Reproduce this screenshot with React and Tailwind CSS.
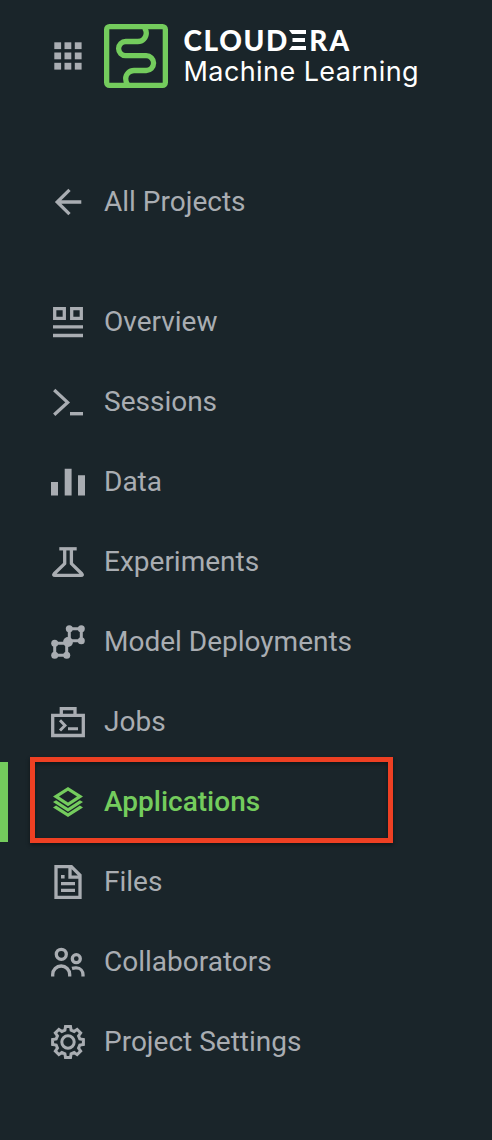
import React from "react";

function Icon({ children }) {
  return (
    <svg viewBox="0 0 36 36" className="size-9 shrink-0" fill="none" stroke="currentColor" strokeWidth="3.3" aria-hidden="true">
      {children}
    </svg>
  );
}

const solid = { fill: "currentColor", stroke: "none" };

function gearPath() {
  const points = [];
  for (let i = 0; i < 8; i++) {
    const a = (i * Math.PI) / 4;
    const corners = [
      [-3.1, -11.8],
      [-2.5, -15.4],
      [2.5, -15.4],
      [3.1, -11.8],
    ];
    for (const [x, y] of corners) {
      const px = 18 + x * Math.cos(a) - y * Math.sin(a);
      const py = 18 + x * Math.sin(a) + y * Math.cos(a);
      points.push(px.toFixed(2) + " " + py.toFixed(2));
    }
  }
  return "M" + points.join("L") + "Z";
}

const icons = {
  back: <path d="M31.3 18H7M19.5 5.8L7.2 18L19.5 30.2" />,
  overview: (
    <>
      <path d="M4.7 4.7H14.3V14.3H4.7ZM21.7 4.7H31.3V14.3H21.7Z" />
      <path {...solid} d="M3 21.2H33V24.6H3ZM3 29.8H33V33.2H3Z" />
    </>
  ),
  sessions: (
    <>
      <path d="M4.2 6L17.6 18.4L4.2 30.8" />
      <path {...solid} d="M20 28H33V31.4H20Z" />
    </>
  ),
  data: <path {...solid} d="M1 18H8V31.4H1ZM14.7 4.7H21.6V31.4H14.7ZM28 11.2H35V31.4H28Z" />,
  experiments: (
    <>
      <path d="M9.3 4.8H26.7" />
      <path strokeLinejoin="round" d="M14.7 5V19.6L4.2 29.8Q2.8 31.4 5 31.4H31Q33.2 31.4 31.8 29.8L21.4 19.6V5" />
    </>
  ),
  models: (
    <>
      <path strokeWidth="3" d="M19.3 4.7H31.3V16.7H19.3ZM4.7 19.2H16.7V31.2H4.7Z" />
      <g {...solid}>
        <circle cx="19.3" cy="4.7" r="3.5" />
        <circle cx="31.3" cy="4.7" r="3.5" />
        <circle cx="31.3" cy="16.7" r="3.5" />
        <circle cx="18" cy="18" r="4.9" />
        <circle cx="4.7" cy="19.2" r="3.5" />
        <circle cx="4.7" cy="31.2" r="3.5" />
        <circle cx="16.7" cy="31.2" r="3.5" />
      </g>
    </>
  ),
  jobs: (
    <>
      <path d="M2.7 11.3H33.3V31.5H2.7ZM11.3 11V4.7H25V11" />
      <path strokeWidth="2.9" d="M10 16.2L15 21.4L10 26.6M18 24.8H28" />
    </>
  ),
  applications: (
    <path
      {...solid}
      fillRule="evenodd"
      d="M18 3L33 12.5L18 22.2L3 12.5ZM18 6.8L9 12.5L18 18.4L27 12.5ZM6.1 16.2L18 23.9L29.9 16.2L33 18.1L18 27.7L3 18.1ZM6.1 21.5L18 29.2L29.9 21.5L33 23.4L18 33L3 23.4Z"
    />
  ),
  files: (
    <>
      <path d="M6 2.7H21.4L30 11.3V33.3H6ZM20 3V13.1H30" />
      <path {...solid} d="M11 11H14.6V14.6H11ZM11 18H25V21.3H11ZM11 24.7H25V28H11Z" />
    </>
  ),
  collaborators: (
    <>
      <circle cx="11.3" cy="10.3" r="5" />
      <circle cx="26.3" cy="14.7" r="4" />
      <path d="M2.7 32.4V30.5A8.5 8.5 0 0 1 19.7 30.5V32.4M22 24.4Q24 23.8 26.3 23.9C30.5 24 33 27.2 33 30.8V32.4" />
    </>
  ),
  settings: (
    <>
      <path strokeWidth="3" d={gearPath()} />
      <circle cx="18" cy="18" r="6.2" strokeWidth="3" />
    </>
  ),
};

const items = [
  { icon: "overview", label: "Overview" },
  { icon: "sessions", label: "Sessions" },
  { icon: "data", label: "Data" },
  { icon: "experiments", label: "Experiments" },
  { icon: "models", label: "Model Deployments" },
  { icon: "jobs", label: "Jobs" },
  { icon: "applications", label: "Applications", active: true },
  { icon: "files", label: "Files" },
  { icon: "collaborators", label: "Collaborators" },
  { icon: "settings", label: "Project Settings" },
];

function NavItem({ icon, label, active }) {
  return (
    <a
      className={
        active
          ? "relative flex h-20 items-center gap-[18px] border-l-8 border-[#74cc5d] pl-[42px] font-medium text-[#74cc5d]"
          : "flex h-20 items-center gap-[18px] pl-[50px] text-[#a9adb2]"
      }
    >
      <Icon>{icons[icon]}</Icon>
      <span className="text-[28px] leading-8 whitespace-nowrap">{label}</span>
      {active && (
        <span className="absolute -top-[5px] left-[22px] h-[86px] w-[363px] border-[5px] border-[#ee4023] shadow-[0_2px_4px_rgba(0,0,0,0.45),inset_0_2px_4px_rgba(0,0,0,0.4)]" />
      )}
    </a>
  );
}

export default function App() {
  return (
    <div className="h-[1140px] w-[492px] overflow-hidden bg-[#1a252a] font-['Roboto',sans-serif]">
      <header className="flex h-[162px] items-start pt-6 pl-[54px]">
        <svg viewBox="0 0 28 28" className="mt-[18px] size-7 text-[#a9adb2]" fill="currentColor" aria-hidden="true">
          {[0.3, 10.5, 20.8].map((y) =>
            [0.3, 10.5, 20.8].map((x) => <rect key={x + "-" + y} x={x} y={y} width="6.8" height="6.8" />)
          )}
        </svg>
        <svg viewBox="0 0 64 64" className="ml-[22px] size-16 text-[#74cc5d]" fill="none" stroke="currentColor" strokeWidth="5.3" aria-hidden="true">
          <rect x="2.65" y="2.65" width="58.7" height="58.7" rx="2.8" />
          <path d="M40.5 4Q42.3 6.5 42.3 9A8.5 8.5 0 0 1 33.8 17.5H21.7A7 7 0 0 0 21.7 31.7H42.2A7.4 7.4 0 0 1 42.2 46.5H30A8.3 8.3 0 0 0 21.7 54.8Q21.7 58 23.5 60.5" />
        </svg>
        <div className="ml-[15.5px] flex flex-col text-white">
          <div className="flex h-8 items-center font-['Lato',sans-serif] text-[28px] leading-8 font-black">
            <span className="tracking-[1.6px]">CLOUD</span>
            <svg viewBox="0 0 17 20" className="h-5 w-[17px]" fill="currentColor" role="img" aria-label="E">
              <path d="M0 0H17V4H3ZM3.5 8H16V12H3.5ZM3 16H17V20H0Z" />
            </svg>
            <span className="ml-[3.5px] tracking-[2px]">RA</span>
          </div>
          <div className="font-['Inter',sans-serif] text-[27px] leading-8 tracking-[0.42px] whitespace-nowrap">Machine Learning</div>
        </div>
      </header>
      <NavItem icon="back" label="All Projects" />
      <nav className="mt-10 flex flex-col">
        {items.map((item) => (
          <NavItem key={item.label} {...item} />
        ))}
      </nav>
    </div>
  );
}
